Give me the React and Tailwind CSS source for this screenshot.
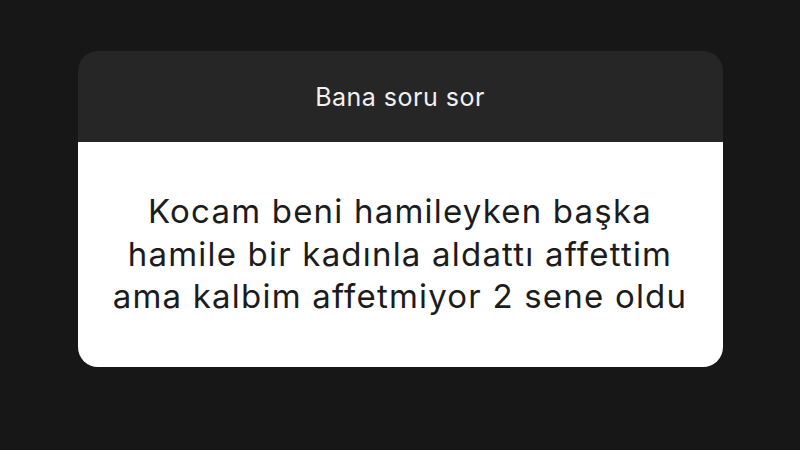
export default function App() {
  return (
    <div className="w-[800px] h-[450px] bg-[#171717] flex items-start justify-center pt-[51px] overflow-hidden">
      {/* Question card */}
      <div className="w-[645px] rounded-[20px] overflow-hidden font-['Inter',sans-serif]">
        <div className="h-[91px] bg-[#262626] flex items-center justify-center">
          <span className="text-[#f0f0f0] text-[25px] leading-[30px] tracking-[0.5px]">Bana soru sor</span>
        </div>
        <div className="h-[225px] bg-white flex flex-col items-center pt-[48px]">
          <p className="text-[#1c1c1c] text-[33px] leading-[42.5px] tracking-[1.2px] text-center">
            Kocam beni hamileyken başka
            <br />
            hamile bir kadınla aldattı affettim
            <br />
            ama kalbim affetmiyor 2 sene oldu
          </p>
        </div>
      </div>
    </div>
  );
}
